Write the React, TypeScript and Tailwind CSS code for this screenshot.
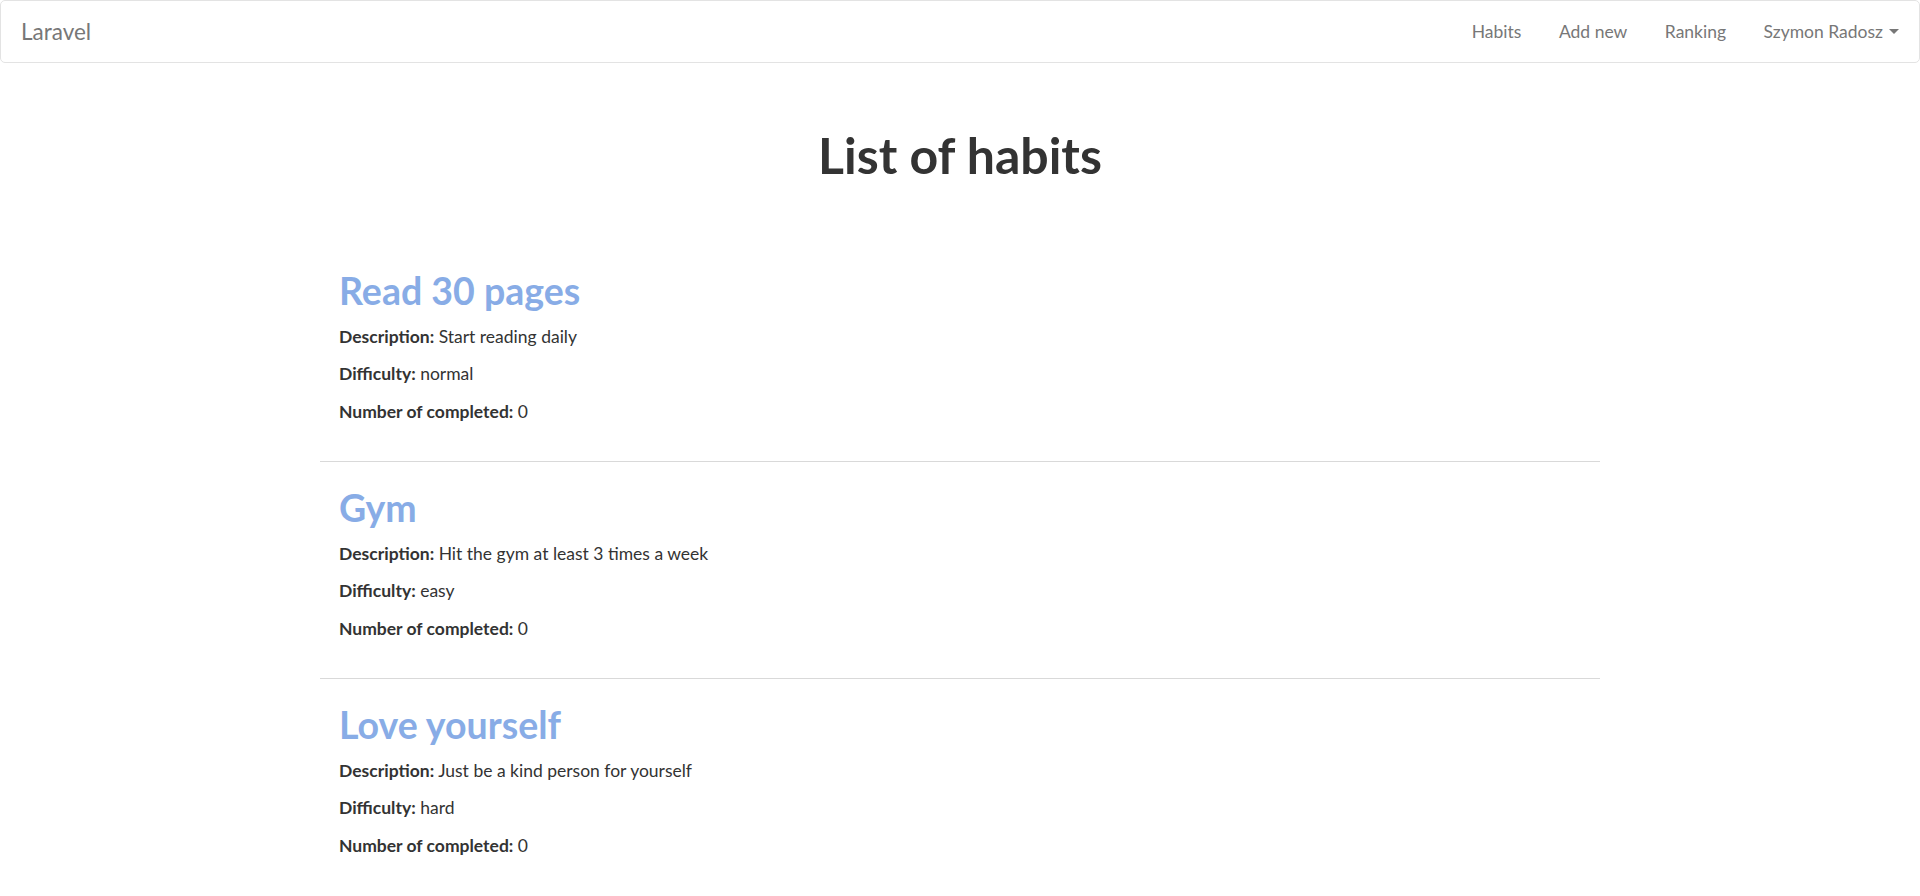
import React from 'react';

type Habit = {
  name: string;
  description: string;
  difficulty: string;
  completed: number;
};

const habits: Habit[] = [
  { name: 'Read 30 pages', description: 'Start reading daily', difficulty: 'normal', completed: 0 },
  { name: 'Gym', description: 'Hit the gym at least 3 times a week', difficulty: 'easy', completed: 0 },
  { name: 'Love yourself', description: 'Just be a kind person for yourself', difficulty: 'hard', completed: 0 },
];

function Navbar() {
  const links = ['Habits', 'Add new', 'Ranking'];
  return (
    <nav className="h-[63px] bg-white border border-[#e3e3e3] rounded-[5px] flex items-center justify-between">
      <a href="#" className="pl-[20px] text-[22.5px] text-[#777] leading-[25px]">
        Laravel
      </a>
      <ul className="flex items-center pr-[1px]">
        {links.map((l) => (
          <li key={l}>
            <a href="#" className="block px-[18.75px] text-[17.5px] leading-[25px] text-[#777]">
              {l}
            </a>
          </li>
        ))}
        <li>
          <a href="#" className="flex items-center pl-[18.75px] pr-[19px] text-[17.5px] leading-[25px] text-[#777]">
            Szymon Radosz
            <span className="ml-[6px] w-0 h-0 border-t-[5px] border-t-[#777] border-x-[5px] border-x-transparent" />
          </a>
        </li>
      </ul>
    </nav>
  );
}

function HabitItem({ habit, last }: { habit: Habit; last: boolean }) {
  return (
    <div className={'px-[19px] pt-[25px] pb-[25px] ' + (last ? '' : 'border-b border-[#d9d9d9]')}>
      <h2 className="text-[37.5px] leading-[41px] font-bold text-[#88ace6] mb-[12.5px]">{habit.name}</h2>
      <p className="text-[17.5px] leading-[25px] mb-[12.5px]">
        <span className="font-bold">Description:</span> {habit.description}
      </p>
      <p className="text-[17.5px] leading-[25px] mb-[12.5px]">
        <span className="font-bold">Difficulty:</span> {habit.difficulty}
      </p>
      <p className="text-[17.5px] leading-[25px] mb-[12.5px]">
        <span className="font-bold">Number of completed:</span> {habit.completed}
      </p>
    </div>
  );
}

export default function App() {
  return (
    <div className="min-h-screen bg-white text-[#333] font-['Lato',sans-serif]">
      <Navbar />
      <main>
        <h1 className="mt-[66px] mb-[64px] text-center text-[50px] leading-[52px] font-bold text-[#333]">
          List of habits
        </h1>
        <div className="w-[1280px] mx-auto">
          {habits.map((h, i) => (
            <HabitItem key={h.name} habit={h} last={i === habits.length - 1} />
          ))}
        </div>
      </main>
    </div>
  );
}
